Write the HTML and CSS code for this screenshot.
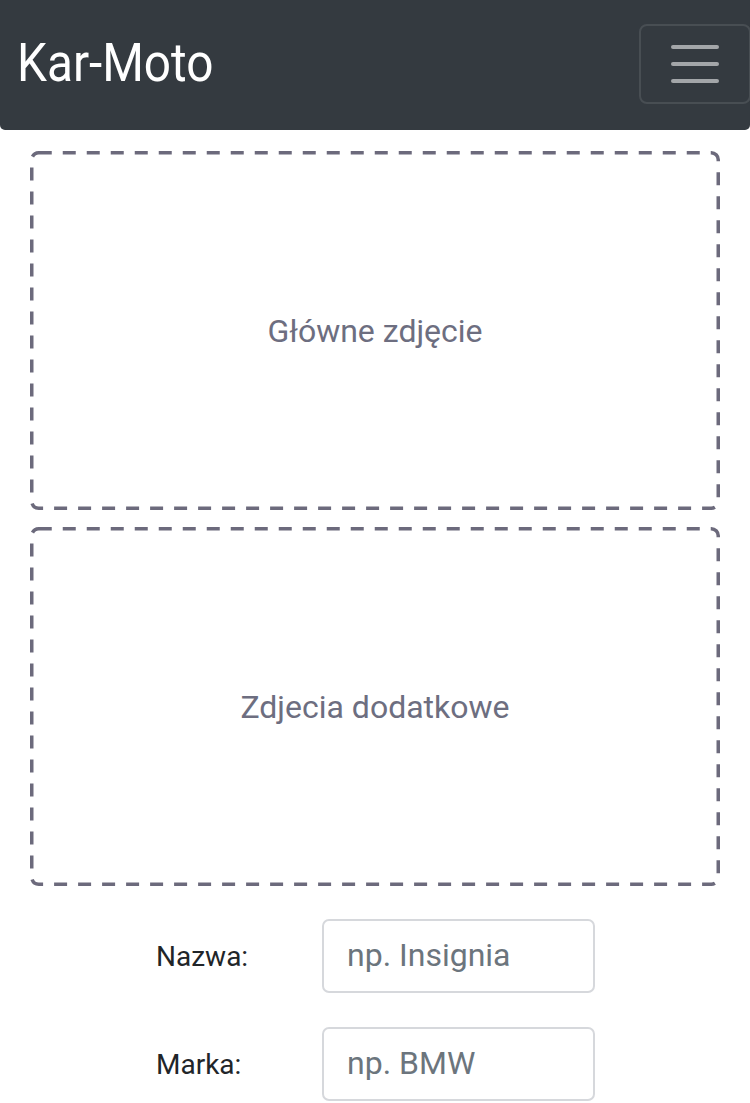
FILE: index.html
```html
<!DOCTYPE html>
<html lang="pl">
<head>
<meta charset="utf-8">
<title>Kar-Moto</title>
<link rel="stylesheet" href="styles.css">
</head>
<body>
<nav class="navbar">
  <a class="brand" href="#">Kar-Moto</a>
  <button class="toggler" type="button" aria-label="Menu">
    <span class="bar"></span>
    <span class="bar"></span>
    <span class="bar"></span>
  </button>
</nav>
<main class="content">
  <div class="dropzone">
    <svg class="frame" viewBox="0 0 690 359" aria-hidden="true"><rect x="1.75" y="1.75" width="686.5" height="355.5" rx="7" ry="7"/></svg>
    <span class="dz-text">Główne zdjęcie</span>
  </div>
  <div class="dropzone">
    <svg class="frame" viewBox="0 0 690 359" aria-hidden="true"><rect x="1.75" y="1.75" width="686.5" height="355.5" rx="7" ry="7"/></svg>
    <span class="dz-text">Zdjecia dodatkowe</span>
  </div>
  <form class="form">
    <div class="row">
      <label class="label" for="nazwa">Nazwa:</label>
      <input class="input" id="nazwa" type="text" placeholder="np. Insignia">
    </div>
    <div class="row">
      <label class="label" for="marka">Marka:</label>
      <input class="input" id="marka" type="text" placeholder="np. BMW">
    </div>
  </form>
</main>
</body>
</html>
```
FILE: styles.css
```css
* { box-sizing: border-box; }
html, body { margin: 0; padding: 0; background: #fff; }
body {
  font-family: Roboto, "Noto Sans", "Liberation Sans", sans-serif;
  color: #212529;
  overflow: hidden;
}
.navbar {
  height: 130px;
  background: #343a40;
  border-radius: 0 0 5px 5px;
  display: flex;
  align-items: center;
  justify-content: space-between;
  padding: 0 0 4px 17px;
}
.brand {
  color: #fff;
  text-decoration: none;
  font-size: 53px;
  line-height: 1;
  display: inline-block;
  transform: scaleX(0.9);
  transform-origin: left center;
}
.toggler {
  width: 112px;
  height: 80px;
  margin-right: -1px;
  margin-top: 2px;
  background: transparent;
  border: 2px solid rgba(255,255,255,0.1);
  border-radius: 8px;
  display: flex;
  flex-direction: column;
  align-items: center;
  justify-content: center;
  gap: 13px;
  padding: 0;
}
.bar {
  display: block;
  width: 48px;
  height: 4px;
  border-radius: 2px;
  background: rgba(255,255,255,0.55);
}
.content {
  padding: 21px 30px 0;
  display: flex;
  flex-direction: column;
  gap: 17px;
}
.dropzone {
  position: relative;
  height: 359px;
  display: flex;
  align-items: center;
  justify-content: center;
  color: #6d6e80;
  font-size: 32px;
}
.frame {
  position: absolute;
  inset: 0;
  width: 100%;
  height: 100%;
}
.frame rect {
  fill: none;
  stroke: #6c6a7c;
  stroke-width: 3.5;
  stroke-dasharray: 13 11;
}
.dz-text { position: relative; }
.form {
  padding-top: 16px;
  display: flex;
  flex-direction: column;
  gap: 34px;
}
.row {
  display: flex;
  align-items: center;
  padding-left: 126px;
}
.label {
  width: 166px;
  font-size: 28px;
  color: #212529;
}
.input {
  width: 273px;
  height: 74px;
  border: 2px solid #d6d8dc;
  border-radius: 7px;
  padding: 0 0 2px 23px;
  font-family: Roboto, "Noto Sans", sans-serif;
  font-size: 32px;
  color: #495057;
  background: #fff;
}
.input::placeholder { color: #6c757d; opacity: 1; }
```
